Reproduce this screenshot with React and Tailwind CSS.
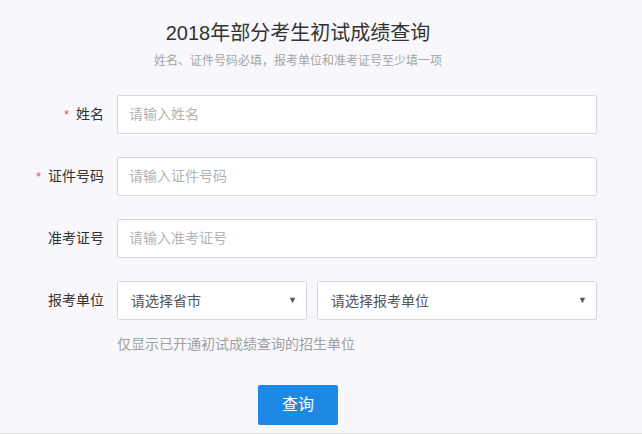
import React from "react";

const font = { fontFamily: '"Liberation Sans", "Noto Sans CJK SC", sans-serif' };

function Label({ text, required }) {
  return (
    <div className="w-[104px] shrink-0 flex items-center justify-end text-[14px] text-[#333]">
      {required && <span className="text-[#e0586a] mr-[7px] text-[13px]">*</span>}
      {text}
    </div>
  );
}

function Field({ placeholder }) {
  return (
    <div className="flex-1 h-[39px] bg-white border border-[#d9d9dc] rounded-[2px] flex items-center pl-[11px] text-[14px] text-[#b3b3b3]">
      {placeholder}
    </div>
  );
}

function Select({ text, className }) {
  return (
    <div className={"h-[39px] bg-white border border-[#d9d9dc] rounded-[2px] flex items-center justify-between pl-[13px] pr-[9px] text-[14px] text-[#555] " + className}>
      <span className="pt-[2px]">{text}</span>
      <span className="text-[9px] text-[#555]">▼</span>
    </div>
  );
}

export default function App() {
  return (
    <div style={font} className="w-[642px] h-[434px] bg-[#f8f7fb] border-b border-[#dcdcdf] flex flex-col">
      <div className="pr-[46px]">
        <div className="pt-[19px] text-center text-[20px] leading-[28px] text-[#333]">
          2018年部分考生初试成绩查询
        </div>
        <div className="mt-[5px] text-center text-[12px] leading-[18px] text-[#a5a5a5]">
          姓名、证件号码必填，报考单位和准考证号至少填一项
        </div>
      </div>

      <div className="mt-[25px] flex flex-col gap-[23px] pr-[45px]">
        <div className="flex gap-[13px]">
          <Label text="姓名" required />
          <Field placeholder="请输入姓名" />
        </div>
        <div className="flex gap-[13px]">
          <Label text="证件号码" required />
          <Field placeholder="请输入证件号码" />
        </div>
        <div className="flex gap-[13px]">
          <Label text="准考证号" />
          <Field placeholder="请输入准考证号" />
        </div>
        <div className="flex gap-[13px]">
          <Label text="报考单位" />
          <div className="flex-1 flex gap-[10px]">
            <Select text="请选择省市" className="w-[190px]" />
            <Select text="请选择报考单位" className="flex-1" />
          </div>
        </div>
      </div>

      <div className="mt-[14px] ml-[117px] text-[14px] leading-[20px] text-[#a0a0a0]">
        仅显示已开通初试成绩查询的招生单位
      </div>

      <div className="mt-[31px] ml-[258px]">
        <button className="w-[80px] h-[40px] bg-[#1e88e5] rounded-[2px] text-white text-[16px]">
          查询
        </button>
      </div>
    </div>
  );
}
